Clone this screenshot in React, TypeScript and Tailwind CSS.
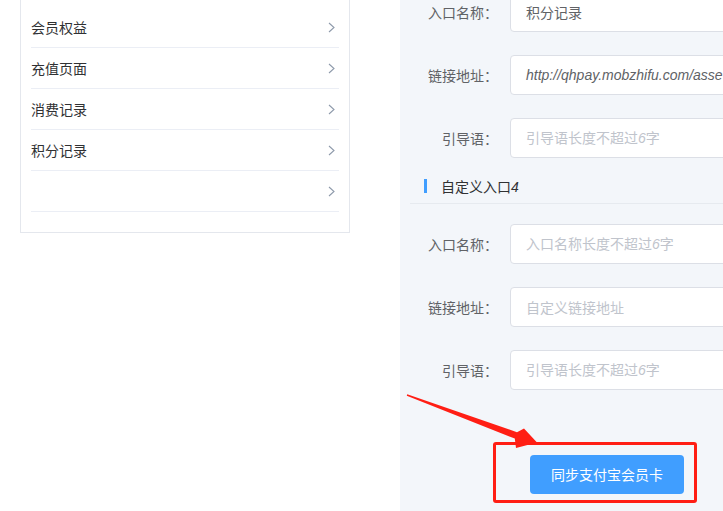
import { FC } from "react";

const menuItems = ["会员权益", "充值页面", "消费记录", "积分记录", ""];

const Chevron: FC = () => (
  <svg width="7" height="11" viewBox="0 0 7 11" className="shrink-0">
    <path d="M1 1 L6 5.5 L1 10" fill="none" stroke="#8e9aab" strokeWidth="1.1" />
  </svg>
);

type FieldProps = {
  label: string;
  value?: React.ReactNode;
  placeholder?: React.ReactNode;
  last?: boolean;
};

const Field: FC<FieldProps> = ({ label, value, placeholder, last }) => (
  <div className={`flex items-center h-[40px] ${last ? "" : "mb-[23px]"}`}>
    <label className="w-[110px] shrink-0 pr-[12px] text-right text-[14px] text-[#606266]">
      {label}
    </label>
    <div className="w-[300px] shrink-0 h-[40px] flex items-center px-[15px] bg-white border border-[#dcdfe6] rounded-[4px] text-[14px] whitespace-nowrap overflow-hidden">
      {value ? (
        <span className="text-[#606266]">{value}</span>
      ) : (
        <span className="text-[#c0c4cc]">{placeholder}</span>
      )}
    </div>
  </div>
);

const Six = () => <i className="font-['Liberation_Sans',sans-serif]">6</i>;

export default function App() {
  return (
    <div className="relative w-[723px] h-[511px] overflow-hidden flex bg-white font-['Noto_Sans_CJK_SC',sans-serif]">
      {/* left: menu preview */}
      <div className="w-[400px] shrink-0 bg-white">
        <div className="-mt-[5px] ml-[20px] w-[330px] border border-[#e4e7ed] px-[10px] pt-[11px] pb-[20px]">
          {menuItems.map((item, i) => (
            <div
              key={i}
              className="h-[41px] flex items-center justify-between border-b border-[#ebeef5] pr-[4px]"
            >
              <span className="text-[14px] text-[#303133]">{item}</span>
              <Chevron />
            </div>
          ))}
        </div>
      </div>

      {/* right: form */}
      <div className="flex-1 bg-[#f3f6fa] overflow-hidden">
        <div className="-mt-[8px]">
          <Field label="入口名称：" value="积分记录" />
          <Field
            label="链接地址："
            value={
              <i className="font-['Liberation_Sans',sans-serif]">
                http://qhpay.mobzhifu.com/asse
              </i>
            }
          />
          <Field
            label="引导语："
            placeholder={
              <>
                引导语长度不超过<Six />字
              </>
            }
            last
          />

          <div className="mt-[21px] ml-[10px] pl-[14px] pb-[10px] border-b border-[#e6eaef]">
            <div className="flex items-center h-[14px]">
              <span className="w-[3px] h-[14px] bg-[#409eff] mr-[14px]" />
              <span className="text-[14px] leading-[14px] text-[#303133]">
                自定义入口<i className="font-['Liberation_Sans',sans-serif]">4</i>
              </span>
            </div>
          </div>

          <div className="mt-[20px]">
            <Field
              label="入口名称："
              placeholder={
                <>
                  入口名称长度不超过<Six />字
                </>
              }
            />
            <Field label="链接地址：" placeholder="自定义链接地址" />
            <Field
              label="引导语："
              placeholder={
                <>
                  引导语长度不超过<Six />字
                </>
              }
              last
            />
          </div>

          <div className="mt-[52px] ml-[93px] w-[204px] h-[61px] border-[3px] border-[#ff1e14] rounded-[3px] pl-[34px] pt-[10px]">
            <button className="w-[154px] h-[39px] rounded-[4px] bg-[#409eff] text-white text-[14px]">
              同步支付宝会员卡
            </button>
          </div>
        </div>
      </div>

      {/* annotation arrow */}
      <svg
        className="absolute left-0 top-0 pointer-events-none"
        width="723"
        height="511"
        viewBox="0 0 723 511"
      >
        <polygon
          points="407.2,394.3 517,432.2 524,428.5 537,442.5 516,448 514.8,438.6 406.8,395.7"
          fill="#ff1e14"
        />
      </svg>
    </div>
  );
}
